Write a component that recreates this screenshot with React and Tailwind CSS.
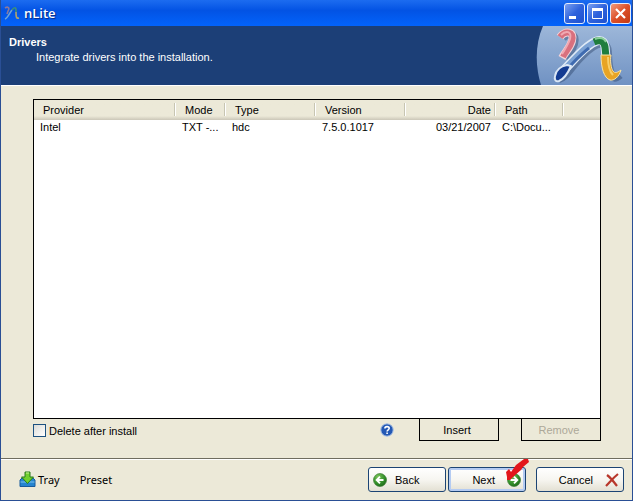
import { useState } from 'react';

const drivers = [
  { provider: 'Intel', mode: 'TXT -...', type: 'hdc', version: '7.5.0.1017', date: '03/21/2007', path: 'C:\\Docu...' },
];

const columns = [
  { label: 'Provider', className: 'w-[142px] pl-[9px] text-left' },
  { label: 'Mode', className: 'w-[50px] pl-[9px] text-left' },
  { label: 'Type', className: 'w-[90px] pl-[9px] text-left' },
  { label: 'Version', className: 'w-[90px] pl-[9px] text-left' },
  { label: 'Date', className: 'w-[90px] pr-[5px] text-right' },
  { label: 'Path', className: 'w-[68px] pl-[9px] text-left' },
];

function Ribbon({ className }) {
  return (
    <svg className={className} viewBox="0 0 72 58" fill="none" strokeLinejoin="round" aria-hidden="true">
      <g stroke="#243a60" strokeOpacity="0.4" strokeWidth="8" transform="translate(2 2)">
        <path d="M9 9C15 3 23 5 20 15C18 21 15 24 12 30" />
        <path d="M5 50C13 48 18 36 28 27C37 18 44 13 50 15C56 18 53 28 55 37C57 47 59 52 66 46" />
      </g>

      <path d="M8 10C13 3 23 4 20 14C18 21 14 24 10 31" stroke="#f3d3d8" strokeWidth="8" />
      <path d="M8 10C13 3 23 4 20 14C18 21 14 24 11 30" stroke="#d9707e" strokeWidth="6" />
      <path d="M9 8C14 3 20 4 18 12C16 18 13 22 10 27" stroke="#f0a9b2" strokeWidth="2" />

      <path d="M10 45C19 36 26 27 35 20C42 14 48 12 51 15C54 18 53 23 54 30" stroke="#dfeaf6" strokeWidth="9" />
      <path d="M10 45C19 36 26 27 35 20C39 17 42 15 45 14" stroke="#7da3d4" strokeWidth="6" />
      <path d="M14 43C22 35 29 27 37 21" stroke="#3f6bb0" strokeWidth="3" />
      <path d="M42 15C49 12 52 15 53 20L54 30" stroke="#1f7d3d" strokeWidth="7" />
      <path d="M43 12C48 10 52 11 54 15" stroke="#8ccf9b" strokeWidth="2" />

      <path d="M49 28H59C58 34 59 41 61 44C63 47 66 45 69 43C67 50 62 54 58 53C52 51 49 41 49 28Z" fill="#e8a423" stroke="#f8e3a4" strokeWidth="1" />
      <path d="M56 30C56 38 58 45 61 48" stroke="#f7cf6a" strokeWidth="2" />

      <path d="M3 49C4 43 9 39 15 38L19 39C16 46 12 52 7 54C4 55 2 53 3 49Z" fill="#143c92" stroke="#dbe7f5" strokeWidth="2" />
    </svg>
  );
}

function HeaderLogo() {
  return (
    <div className="relative h-full w-24 shrink-0 overflow-hidden">
      <svg className="absolute inset-0 h-full w-full" viewBox="0 0 96 59" aria-hidden="true">
        <defs>
          <linearGradient id="disc" x1="0" y1="0" x2="0" y2="1">
            <stop offset="0" stopColor="#9db7d9" />
            <stop offset="1" stopColor="#7092c3" />
          </linearGradient>
        </defs>
        <path d="M7 0C-1 18 -1 40 5 59H96V0Z" fill="url(#disc)" />
      </svg>
      <Ribbon className="absolute left-4 top-px h-[58px] w-[72px]" />
    </div>
  );
}

function CaptionButton({ label, close, children }) {
  const tone = close
    ? 'bg-linear-to-br from-[#ee9a7c] via-[#dc4f28] to-[#c23a13]'
    : 'bg-linear-to-br from-[#7b9ff0] via-[#2f62dc] to-[#1d50cf]';
  return (
    <button type="button" aria-label={label} className={`size-[21px] rounded-[3px] border border-[#e4ecfc] ${tone}`}>
      <svg viewBox="0 0 19 19" className="block size-full" fill="none" stroke="#fff" aria-hidden="true">
        {children}
      </svg>
    </button>
  );
}

function TitleBar() {
  return (
    <div className="flex h-[26px] items-center bg-linear-to-b from-[#1c6cf0] via-[#0353e4] via-40% to-[#0363fb] pl-[3px] pr-px">
      <svg className="mr-1 size-4" viewBox="0 0 16 16" fill="none" strokeWidth="1.6" aria-hidden="true">
        <path d="M1 3C4 1 6 3 4 6L3 9" stroke="#8a789c" />
        <path d="M1 14C4 13 6 7 8 5" stroke="#6fa4d8" />
        <path d="M8 5C10 2 12 2 12 5L12 7" stroke="#3e8f78" />
        <path d="M12 7C12 11 12 14 15 13" stroke="#b0a36c" />
      </svg>
      <h1 className="flex-1 font-['Open_Sans','Noto_Sans',sans-serif] text-[13px] font-semibold leading-5 text-white [text-shadow:1px_1px_1px_#0a2a80]">
        nLite
      </h1>
      <div className="flex gap-[2px]">
        <CaptionButton label="Minimize">
          <path d="M4 13.5H11" strokeWidth="3" />
        </CaptionButton>
        <CaptionButton label="Maximize">
          <path d="M4.500 5V14.500H14.500V5" strokeWidth="1" />
          <path d="M4 5.500H15" strokeWidth="3" />
        </CaptionButton>
        <CaptionButton label="Close" close>
          <path d="M5 5L14 14M14 5L5 14" strokeWidth="2.200" />
        </CaptionButton>
      </div>
    </div>
  );
}

function ArrowBall({ left }) {
  return (
    <svg className="size-[14px] shrink-0" viewBox="0 0 14 14" aria-hidden="true">
      <defs>
        <radialGradient id="ball" cx="0.35" cy="0.25" r="0.8">
          <stop offset="0" stopColor="#7cc45a" />
          <stop offset="0.6" stopColor="#35912b" />
          <stop offset="1" stopColor="#1e6a1b" />
        </radialGradient>
      </defs>
      <circle cx="7" cy="7" r="6.500" fill="url(#ball)" stroke="#2b7224" strokeWidth="0.600" />
      <path
        d={left ? 'M10.500 7H4M7 3.700L3.700 7L7 10.300' : 'M3.500 7H10M7 3.700L10.300 7L7 10.300'}
        fill="none"
        stroke="#fff"
        strokeWidth="1.900"
      />
    </svg>
  );
}

const navButton =
  'relative flex h-[25px] items-center rounded-[3px] border border-[#1c4474] bg-linear-to-b from-white via-[#f7f6f1] to-[#e3e0d3] px-1';

export default function App() {
  const [deleteAfter, setDeleteAfter] = useState(false);

  return (
    <div className="flex min-h-screen flex-col bg-white pb-[3px] pr-px font-['Liberation_Sans',Arial,sans-serif] text-[11px] leading-4 text-black">
      <div className="flex flex-1 flex-col border-x border-b border-[#2a4f95] bg-[#ece9d8]">
        <TitleBar />

        <header className="flex h-[59px] justify-between bg-[#1c3f77] text-white">
          <div className="pl-2 pt-2">
            <h2 className="font-bold">Drivers</h2>
            <p className="pl-[27px] leading-[14px]">Integrate drivers into the installation.</p>
          </div>
          <HeaderLogo />
        </header>

        <main className="flex flex-1 flex-col border-t border-white pb-[17px] pl-8 pr-[31px] pt-[13px]">
          <div className="flex-1 border border-black bg-white">
            <table className="w-full table-fixed border-collapse leading-[14px]">
              <thead>
                <tr className="h-5 bg-linear-to-b from-[#ece9d8] from-80% to-[#cbc7b8]">
                  {columns.map((col) => (
                    <th key={col.label} scope="col" className={`relative font-normal ${col.className}`}>
                      {col.label}
                      <span className="absolute right-0 top-[3px] h-[13px] w-[2px] border-l border-[#c7c5b2] bg-white" />
                    </th>
                  ))}
                  <td />
                </tr>
              </thead>
              <tbody>
                {drivers.map((d) => (
                  <tr key={d.path}>
                    <td className="pl-[6px]">{d.provider}</td>
                    <td className="pl-[6px]">{d.mode}</td>
                    <td className="pl-[6px]">{d.type}</td>
                    <td className="pl-[6px]">{d.version}</td>
                    <td className="pr-[5px] text-right">{d.date}</td>
                    <td className="pl-[6px]">{d.path}</td>
                    <td />
                  </tr>
                ))}
              </tbody>
            </table>
          </div>

          <div className="flex h-[22px] items-center">
            <label className="flex items-center gap-[3px] pt-px">
              <input
                type="checkbox"
                checked={deleteAfter}
                onChange={(e) => setDeleteAfter(e.target.checked)}
                className="size-[13px] appearance-none border border-[#1c5180] bg-linear-to-br from-[#dcdcd7] to-white checked:bg-[#21a121]"
              />
              Delete after install
            </label>
            <button type="button" aria-label="Help" className="ml-auto mr-[25px] size-[14px]">
              <svg viewBox="0 0 14 14" aria-hidden="true">
                <circle cx="7" cy="7" r="6.200" fill="#2358b4" stroke="#a9c1e6" />
                <path d="M4.900 5.500C4.900 3 9.200 3 9.200 5.300C9.200 6.800 7.100 6.800 7.100 8.500M7.100 9.600V11" fill="none" stroke="#fff" strokeWidth="1.600" />
              </svg>
            </button>
            <button type="button" className="h-full w-20 border border-t-0 border-black pr-1">
              Insert
            </button>
            <button type="button" disabled className="ml-[22px] h-full w-20 border border-t-0 border-black pr-1 text-[#aca899]">
              Remove
            </button>
          </div>
        </main>

        <footer className="flex items-center border-t border-[#6f6d5f] pb-2 pl-[18px] pr-2 pt-2 shadow-[inset_0_1px_0_#fff]">
          <div className="flex gap-5 font-['Noto_Sans',sans-serif]">
            <button type="button" className="flex items-center gap-[2px]">
              <svg className="size-[17px]" viewBox="0 0 17 17" aria-hidden="true">
                <path d="M1 9L3 7H14L16 9V15.500H1Z" fill="#2584cf" stroke="#175a9c" />
                <path d="M1.500 11H15.500" stroke="#7cc3ef" />
                <path d="M6 1H11V6H14.500L8.500 12.500L2.500 6H6Z" fill="#71cf2e" stroke="#287a1b" />
                <path d="M7 2H10" stroke="#c9f29b" />
              </svg>
              Tray
            </button>
            <button type="button">Preset</button>
          </div>

          <div className="ml-auto flex gap-[2px]">
            <button type="button" className={`${navButton} w-[78px] gap-2`}>
              <ArrowBall left />
              Back
            </button>
            <button type="button" className={`${navButton} w-[78px] justify-end gap-3 shadow-[inset_0_0_0_2px_#b4cbf2]`}>
              Next
              <ArrowBall />
              <svg className="absolute -right-1 -top-[10px] h-6 w-[26px]" viewBox="0 0 26 24" aria-hidden="true">
                <path d="M3 14L6 11L8 14L13 7L21 1L25 1L26 4L20 9L18 12L11 18L7 22L4 22L4 19Z" fill="#e3161b" />
              </svg>
            </button>
          </div>
          <button type="button" className={`${navButton} ml-[10px] w-[88px] justify-end gap-3`}>
            Cancel
            <svg className="size-[14px]" viewBox="0 0 14 14" fill="none" aria-hidden="true">
              <path d="M2 2C6 5 9 9 12 13M13 1C8 5 5 9 1 13" stroke="#b8372b" strokeWidth="2.200" />
            </svg>
          </button>
        </footer>
      </div>
    </div>
  );
}
